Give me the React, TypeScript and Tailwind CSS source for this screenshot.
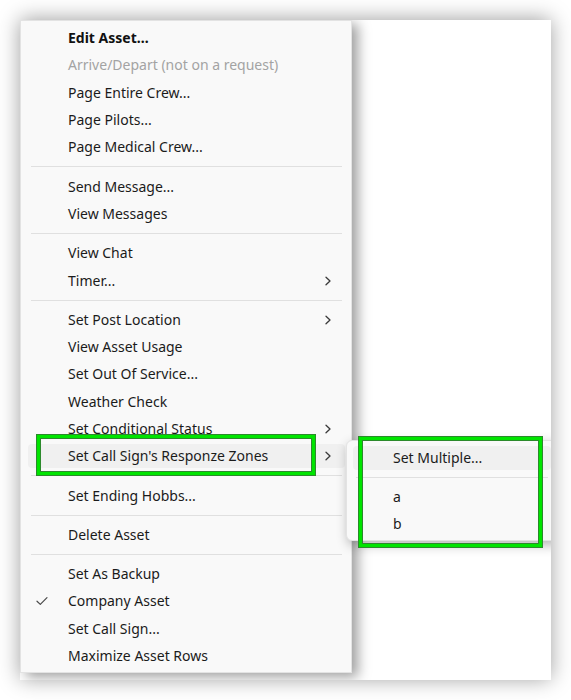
import React from "react";

type Item =
  | { kind: "sep" }
  | {
      kind: "item";
      label: string;
      bold?: boolean;
      disabled?: boolean;
      sub?: boolean;
      checked?: boolean;
      active?: boolean;
    };

const items: Item[] = [
  { kind: "item", label: "Edit Asset...", bold: true },
  { kind: "item", label: "Arrive/Depart (not on a request)", disabled: true },
  { kind: "item", label: "Page Entire Crew..." },
  { kind: "item", label: "Page Pilots..." },
  { kind: "item", label: "Page Medical Crew..." },
  { kind: "sep" },
  { kind: "item", label: "Send Message..." },
  { kind: "item", label: "View Messages" },
  { kind: "sep" },
  { kind: "item", label: "View Chat" },
  { kind: "item", label: "Timer...", sub: true },
  { kind: "sep" },
  { kind: "item", label: "Set Post Location", sub: true },
  { kind: "item", label: "View Asset Usage" },
  { kind: "item", label: "Set Out Of Service..." },
  { kind: "item", label: "Weather Check" },
  { kind: "item", label: "Set Conditional Status", sub: true },
  { kind: "item", label: "Set Call Sign's Responze Zones", sub: true, active: true },
  { kind: "sep" },
  { kind: "item", label: "Set Ending Hobbs..." },
  { kind: "sep" },
  { kind: "item", label: "Delete Asset" },
  { kind: "sep" },
  { kind: "item", label: "Set As Backup" },
  { kind: "item", label: "Company Asset", checked: true },
  { kind: "item", label: "Set Call Sign..." },
  { kind: "item", label: "Maximize Asset Rows" },
];

const subItems: Item[] = [
  { kind: "item", label: "Set Multiple...", active: true },
  { kind: "sep" },
  { kind: "item", label: "a" },
  { kind: "item", label: "b" },
];

function Chevron() {
  return (
    <svg width="8" height="10" viewBox="0 0 8 10" className="shrink-0">
      <path d="M2 1.2 L6 5 L2 8.8" fill="none" stroke="#3a3a3a" strokeWidth="1.3" strokeLinecap="round" strokeLinejoin="round" />
    </svg>
  );
}

function Check() {
  return (
    <svg width="12" height="10" viewBox="0 0 12 10" className="absolute left-[8px] top-1/2 -translate-y-1/2">
      <path d="M1 5.2 L4.3 8.4 L11 1.6" fill="none" stroke="#4a4a4a" strokeWidth="1.2" strokeLinecap="round" strokeLinejoin="round" />
    </svg>
  );
}

function MenuList({ list }: { list: Item[] }) {
  return (
    <>
      {list.map((it, i) =>
        it.kind === "sep" ? (
          <div key={i} className="h-[12px] flex items-center px-[3px]">
            <div className="h-px w-full bg-[#e0e0e0]" />
          </div>
        ) : (
          <div key={i} className="h-[27.3px] py-[1.5px]">
            <div
              className={
                "relative h-full flex items-center pl-[40px] pr-[13px] rounded-[4px] " +
                (it.active ? "bg-[#f0f0f0]" : "")
              }
            >
              {it.checked && <Check />}
              <span
                className={
                  "flex-1 whitespace-nowrap " +
                  (it.bold ? "font-bold text-[#111] " : "") +
                  (it.disabled ? "text-[#a3a3a3]" : "text-[#1b1b1b]")
                }
              >
                {it.label}
              </span>
              {it.sub && <Chevron />}
            </div>
          </div>
        )
      )}
    </>
  );
}

export default function App() {
  return (
    <div className="w-[571px] h-[700px] bg-white p-[20px]" style={{ fontFamily: '"Noto Sans", "Open Sans", sans-serif' }}>
      <div className="relative w-[531px] h-[660px] bg-white overflow-hidden shadow-[0_-1px_20px_rgba(0,0,0,0.38)] text-[14px] leading-none">
        {/* main context menu */}
        <div className="w-[332px] h-[653px] bg-[#f9f9f9] border border-[#e3e3e3] pt-[3.5px] pl-[7px] pr-[6px] shadow-[6px_4px_12px_rgba(0,0,0,0.38)]">
          <MenuList list={items} />
        </div>

        {/* submenu */}
        <div className="absolute left-[326px] top-[420px] w-[212px] h-[101px] bg-[#f9f9f9] border border-[#e3e3e3] rounded-[6px] pt-[3px] pl-[6px] pr-[6px] shadow-[2px_4px_12px_rgba(0,0,0,0.3)]">
          <MenuList list={subItems} />
        </div>

        {/* highlight frames */}
        <div className="absolute left-[17px] top-[415px] w-[278px] h-[40px] border-[3px] border-[#00e400] shadow-[0_0_0_1px_#2c8a2c,inset_0_0_0_1px_#2c8a2c]" />
        <div className="absolute left-[339px] top-[417px] w-[183px] h-[110px] border-[3px] border-[#00e400] shadow-[0_0_0_1px_#2c8a2c,inset_0_0_0_1px_#2c8a2c]" />
      </div>
    </div>
  );
}
